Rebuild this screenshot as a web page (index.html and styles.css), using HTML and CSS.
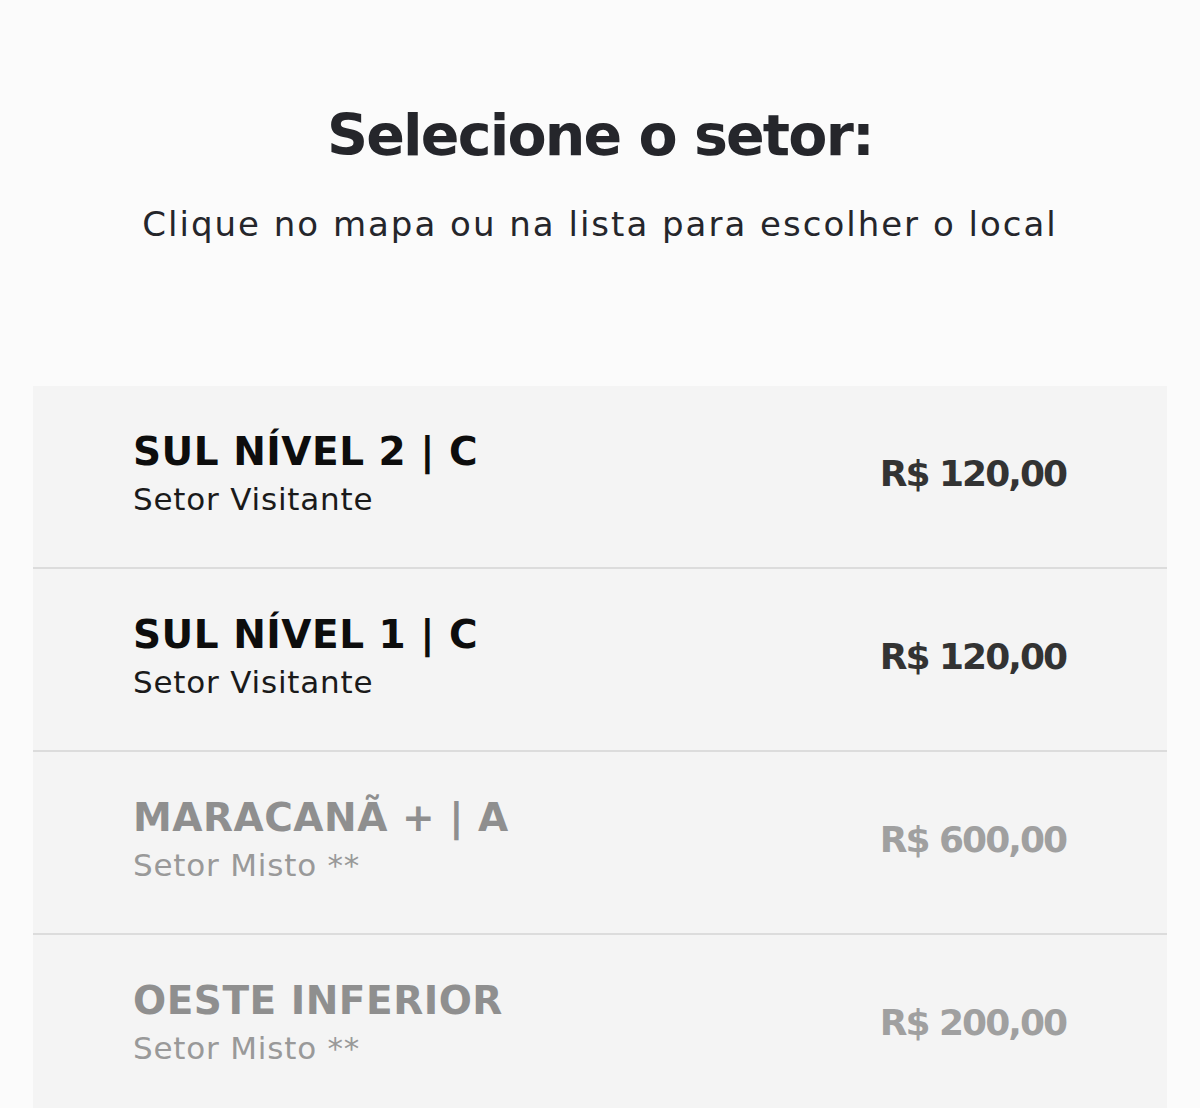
FILE: index.html
```html
<!DOCTYPE html>
<html lang="pt-BR">
<head>
  <meta charset="UTF-8">
  <meta name="viewport" content="width=device-width, initial-scale=1">
  <title>Selecione o setor</title>
  <link rel="stylesheet" href="styles.css">
</head>
<body>
  <div class="page">
    <!-- Cabecalho -->
    <header class="header">
      <h1>Selecione o setor:</h1>
      <p class="hint">Clique no mapa ou na lista para escolher o local</p>
    </header>

    <!-- Lista de setores -->
    <ul class="sector-list">
      <li class="sector">
        <div class="sector-info">
          <span class="sector-name">SUL NÍVEL 2 | C</span>
          <span class="sector-type">Setor Visitante</span>
        </div>
        <span class="sector-price">R$ 120,00</span>
      </li>
      <li class="sector">
        <div class="sector-info">
          <span class="sector-name">SUL NÍVEL 1 | C</span>
          <span class="sector-type">Setor Visitante</span>
        </div>
        <span class="sector-price">R$ 120,00</span>
      </li>
      <li class="sector disabled">
        <div class="sector-info">
          <span class="sector-name">MARACANÃ + | A</span>
          <span class="sector-type">Setor Misto **</span>
        </div>
        <span class="sector-price">R$ 600,00</span>
      </li>
      <li class="sector disabled">
        <div class="sector-info">
          <span class="sector-name">OESTE INFERIOR</span>
          <span class="sector-type">Setor Misto **</span>
        </div>
        <span class="sector-price">R$ 200,00</span>
      </li>
    </ul>
  </div>
</body>
</html>
```

FILE: styles.css
```css
/* Pagina base */
body {
  margin: 0;
  background-color: #fbfbfb;
  font-family: "DejaVu Sans", "Open Sans", sans-serif;
  height: 1108px;
  overflow: hidden;
}
.page {
  padding: 0 33px;
}
/* Cabecalho */
.header {
  text-align: center;
  padding-top: 99px;
  height: 386px;
  box-sizing: border-box;
}
.header h1 {
  margin: 0;
  font-size: 57px;
  line-height: 72px;
  font-weight: 700;
  letter-spacing: -1.8px;
  color: #25262b;
}
.hint {
  margin: 31px 0 0;
  font-size: 34px;
  line-height: 44px;
  letter-spacing: 2px;
  color: #25262b;
}
/* Lista */
.sector-list {
  list-style: none;
  margin: 0;
  padding: 0;
}
.sector {
  display: flex;
  align-items: center;
  justify-content: space-between;
  height: 183px;
  padding: 0 101px 6px 100px;
  box-sizing: border-box;
  background-color: #f4f4f4;
  border-bottom: 2px solid #dcdcdc;
}
.sector-info {
  display: flex;
  flex-direction: column;
}
.sector-name {
  font-size: 39px;
  line-height: 46px;
  font-weight: 700;
  letter-spacing: 0.5px;
  color: #0d0d0d;
}
.sector-type {
  margin-top: 4px;
  font-size: 31px;
  line-height: 40px;
  letter-spacing: 0.8px;
  color: #1a1a1a;
}
.sector-price {
  font-size: 36px;
  line-height: 46px;
  font-weight: 700;
  letter-spacing: -2px;
  color: #333333;
}
.sector.disabled .sector-name {
  color: #8f8f8f;
}
.sector.disabled .sector-type {
  color: #999999;
}
.sector.disabled .sector-price {
  color: #a0a0a0;
}
```
